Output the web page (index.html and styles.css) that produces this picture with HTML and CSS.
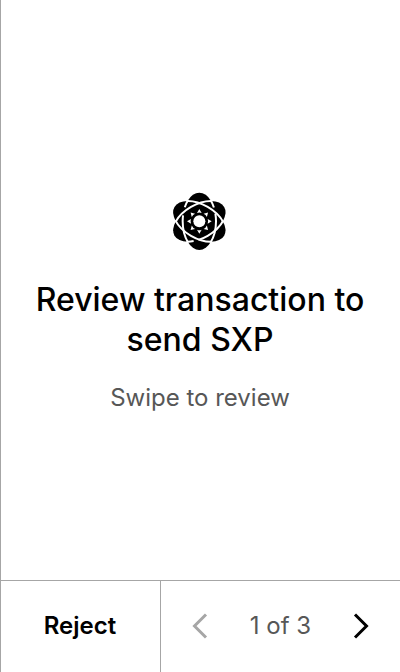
FILE: index.html
```html
<!DOCTYPE html>
<html lang="en">
<head>
<meta charset="utf-8">
<meta name="viewport" content="width=device-width, initial-scale=1">
<title>Review transaction</title>
<link rel="stylesheet" href="styles.css">
</head>
<body>
<div class="screen">
  <main class="content">
    <svg class="logo" viewBox="-94 -94 192 192" aria-hidden="true">
      <g>
        <ellipse rx="86" ry="50" transform="rotate(90)"/>
        <ellipse rx="86" ry="50" transform="rotate(30)"/>
        <ellipse rx="86" ry="50" transform="rotate(-30)"/>
      </g>
      <g class="orbits">
        <ellipse rx="86" ry="50" pathLength="360" stroke-dasharray="0 35 70 20 20 70 20 15 75 35" transform="rotate(90)"/>
        <ellipse rx="86" ry="50" pathLength="360" stroke-dasharray="0 35 110 70 110 35" transform="rotate(30)"/>
        <ellipse rx="86" ry="50" pathLength="360" stroke-dasharray="0 35 80 12 18 70 110 35" transform="rotate(-30)"/>
      </g>
      <g class="sun">
        <circle r="18"/>
        <path id="ray" d="M0 -37L7 -25Q0 -28 -7 -25Z"/>
        <use href="#ray" transform="rotate(45)"/>
        <use href="#ray" transform="rotate(90)"/>
        <use href="#ray" transform="rotate(135)"/>
        <use href="#ray" transform="rotate(180)"/>
        <use href="#ray" transform="rotate(225)"/>
        <use href="#ray" transform="rotate(270)"/>
        <use href="#ray" transform="rotate(315)"/>
      </g>
    </svg>
    <h1 class="title">Review transaction to send SXP</h1>
    <p class="hint">Swipe to review</p>
  </main>
  <footer class="footer">
    <button class="reject" type="button">Reject</button>
    <nav class="pager" aria-label="Pages">
      <button class="arrow" type="button" aria-label="Previous" disabled>
        <svg viewBox="0 0 40 40" aria-hidden="true"><path d="M26 8.500L14.500 20L26 31.500"/></svg>
      </button>
      <span class="count">1 of 3</span>
      <button class="arrow" type="button" aria-label="Next">
        <svg viewBox="0 0 40 40" aria-hidden="true"><path d="M14 8.500L25.500 20L14 31.500"/></svg>
      </button>
    </nav>
  </footer>
</div>
</body>
</html>
```

FILE: styles.css
```css
* {
  box-sizing: border-box;
}

body {
  margin: 0;
  background: #fff;
  color: #000;
  font-family: Inter, "Liberation Sans", sans-serif;
}

.screen {
  display: flex;
  flex-direction: column;
  min-height: 100vh;
  box-shadow: inset 1px 0 #a6a6a6;
}

.content {
  flex: 1;
  display: flex;
  flex-direction: column;
  align-items: center;
  justify-content: center;
  padding: 26px 24px 0;
  text-align: center;
}

.logo {
  width: 64px;
  height: 64px;
}

.orbits {
  fill: none;
  stroke: #fff;
  stroke-width: 6;
}

.sun {
  fill: #fff;
}

.title {
  margin: 26px 0 0;
  font-size: 32px;
  line-height: 40px;
  font-weight: 500;
}

.hint {
  margin: 20px 0 0;
  color: #575757;
  font-size: 24px;
  line-height: 36px;
}

.footer {
  display: grid;
  grid-template-columns: 2fr 3fr;
  height: 92px;
  border-top: 1px solid #a6a6a6;
}

button {
  border: 0;
  padding: 0;
  background: none;
  color: inherit;
  font: inherit;
}

.reject {
  padding-bottom: 2px;
  font-size: 24px;
  font-weight: 600;
}

.pager {
  display: flex;
  align-items: center;
  justify-content: space-between;
  padding: 0 19px 2px;
  border-left: 1px solid #a6a6a6;
}

.arrow {
  width: 40px;
  height: 40px;
}

.arrow svg {
  display: block;
  fill: none;
  stroke: #000;
  stroke-width: 3;
}

.arrow:disabled svg {
  stroke: #a6a6a6;
}

.count {
  color: #575757;
  font-size: 24px;
  line-height: 32px;
}
```
